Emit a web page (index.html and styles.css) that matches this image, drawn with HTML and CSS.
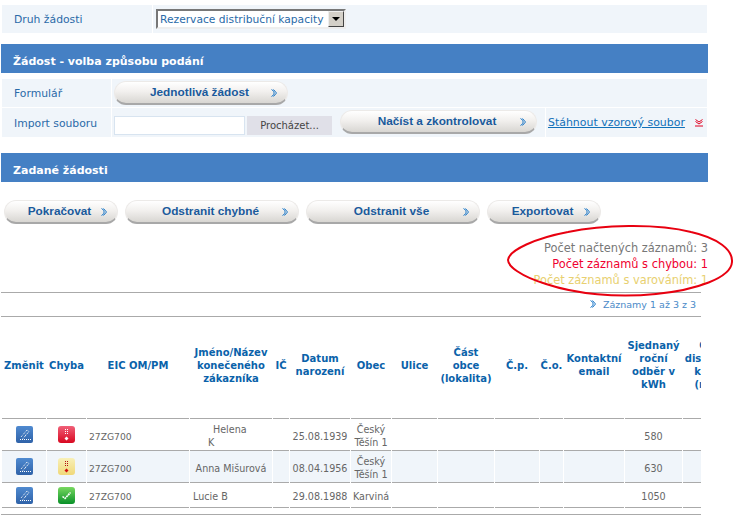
FILE: index.html
```html
<!DOCTYPE html>
<html>
<head>
  <title>Žádost</title>
  <link rel="stylesheet" href="styles.css">
</head>
<body>
  <svg class="defs" width="0" height="0">
    <defs>
      <symbol id="chev" viewBox="0 0 6 8">
        <path d="M0.5 0.5 L3 2.5 L3 5.5 L0.5 7.5 M2.5 0.5 L5.5 4 L2.5 7.5" fill="none" stroke="#1c78c8" stroke-width="1"/>
      </symbol>
      <linearGradient id="gBlue" x1="0" y1="0" x2="0" y2="1"><stop offset="0" stop-color="#4f8ad0"/><stop offset="1" stop-color="#2f62a8"/></linearGradient>
      <linearGradient id="gRed" x1="0" y1="0" x2="0" y2="1"><stop offset="0" stop-color="#f06078"/><stop offset="1" stop-color="#d80820"/></linearGradient>
      <linearGradient id="gYellow" x1="0" y1="0" x2="0" y2="1"><stop offset="0" stop-color="#f8f0b8"/><stop offset="1" stop-color="#f0d878"/></linearGradient>
      <linearGradient id="gGreen" x1="0" y1="0" x2="0" y2="1"><stop offset="0" stop-color="#78d860"/><stop offset="1" stop-color="#089028"/></linearGradient>
      <symbol id="edit" viewBox="0 0 17 17">
        <rect width="17" height="17" rx="2" fill="url(#gBlue)"/>
        <path d="M4 13.5 H15 M5 11 L11 4 L13 5.5 L7 12.5 M9 9 L10.5 10" fill="none" stroke="#fff" stroke-width="1" stroke-dasharray="1 1"/>
      </symbol>
      <symbol id="err" viewBox="0 0 17 17">
        <rect width="17" height="17" rx="3" fill="url(#gRed)"/>
        <path d="M7 3.5 H8 M9 3.5 H10 M7 5.5 H8 M9 5.5 H10 M7 7.5 H8 M9 7.5 H10" stroke="#fff" stroke-width="1"/>
        <path d="M8.5 10.5 L10.5 12.5 L8.5 14.5 L6.5 12.5 Z" fill="#fff"/>
      </symbol>
      <symbol id="warn" viewBox="0 0 17 17">
        <rect width="17" height="17" rx="3" fill="url(#gYellow)"/>
        <path d="M7 3.5 H8 M9 3.5 H10 M7 5.5 H8 M9 5.5 H10 M7 7.5 H8 M9 7.5 H10" stroke="#b01010" stroke-width="1"/>
        <path d="M8.5 10.5 L10.5 12.5 L8.5 14.5 L6.5 12.5 Z" fill="#d01010"/>
      </symbol>
      <symbol id="ok" viewBox="0 0 17 17">
        <rect width="17" height="17" rx="3" fill="url(#gGreen)"/>
        <path d="M4.5 9.5 L7 11.5 L12.5 5.5" fill="none" stroke="#fff" stroke-width="1.6" stroke-dasharray="2 0.6"/>
      </symbol>
    </defs>
  </svg>

  <div class="page">
    <div class="row row-type">
      <div class="cell cell-label-wide">Druh žádosti</div>
      <div class="cell cell-fill">
        <div class="fake-select">
          <span class="fake-select-text">Rezervace distribuční kapacity</span>
          <span class="fake-select-arrow"></span>
        </div>
      </div>
    </div>

    <h2 class="band band-first">Žádost - volba způsobu podání</h2>

    <div class="form-rows">
      <div class="row row-form">
        <div class="cell cell-label">Formulář</div>
        <div class="cell cell-fill">
          <a class="btn btn-single">Jednotlivá žádost<svg class="chev"><use href="#chev"/></svg></a>
        </div>
      </div>
      <div class="row row-import">
        <div class="cell cell-label">Import souboru</div>
        <div class="cell cell-import">
          <input class="file-text" type="text">
          <button class="file-btn" type="button">Procházet...</button>
          <a class="btn btn-load">Načíst a zkontrolovat<svg class="chev"><use href="#chev"/></svg></a>
        </div>
        <div class="cell cell-fill cell-link">
          <a class="sample-link">Stáhnout vzorový soubor</a>
          <svg class="down-icon" width="8" height="8" viewBox="0 0 8 8">
            <path d="M0.5 0.5 L4 3 L7.5 0.5 M0.5 2.5 L4 5 L7.5 2.5" fill="none" stroke="#e00020" stroke-width="1"/>
            <path d="M0 7 H8" stroke="#e00020" stroke-width="1"/>
          </svg>
        </div>
      </div>
    </div>

    <h2 class="band band-second">Zadané žádosti</h2>

    <div class="actions">
      <a class="btn btn-continue">Pokračovat<svg class="chev"><use href="#chev"/></svg></a>
      <a class="btn btn-wide">Odstranit chybné<svg class="chev"><use href="#chev"/></svg></a>
      <a class="btn btn-wide">Odstranit vše<svg class="chev"><use href="#chev"/></svg></a>
      <a class="btn btn-continue">Exportovat<svg class="chev"><use href="#chev"/></svg></a>
    </div>

    <div class="counts">
      <div class="count-all">Počet načtených záznamů: 3</div>
      <div class="count-err">Počet záznamů s chybou: 1</div>
      <div class="count-warn">Počet záznamů s varováním: 1</div>
    </div>

    <div class="pager">
      <svg class="chev"><use href="#chev"/></svg>
      <span>Záznamy 1 až 3 z 3</span>
    </div>

    <div class="table-wrap">
      <table class="grid">
        <colgroup>
          <col class="c44"><col class="c39"><col class="c102"><col class="c82"><col class="c16"><col class="c60"><col class="c40"><col class="c45"><col class="c56"><col class="c44"><col class="c23"><col class="c60"><col class="c57"><col class="c64">
        </colgroup>
        <thead>
          <tr>
            <th>Změnit</th><th>Chyba</th><th>EIC OM/PM</th><th>Jméno/Název konečeného zákazníka</th><th>IČ</th><th>Datum narození</th><th>Obec</th><th>Ulice</th><th>Část<br>obce<br>(lokalita)</th><th>Č.p.</th><th>Č.o.</th><th>Kontaktní email</th><th>Sjednaný roční odběr v kWh</th><th>Ceník distribuční kapacit (r.&nbsp;MW)</th>
          </tr>
        </thead>
        <tbody>
          <tr class="row-tall">
            <td class="icon-cell"><svg class="icon"><use href="#edit"/></svg></td>
            <td class="icon-cell"><svg class="icon"><use href="#err"/></svg></td>
            <td class="eic">27ZG700</td>
            <td class="name-split">Helena<br><span class="name-k">K</span></td>
            <td></td>
            <td>25.08.1939</td>
            <td>Český Těšín 1</td>
            <td></td><td></td><td></td><td></td><td></td>
            <td>580</td>
            <td></td>
          </tr>
          <tr class="row-tall row-alt">
            <td class="icon-cell"><svg class="icon"><use href="#edit"/></svg></td>
            <td class="icon-cell"><svg class="icon"><use href="#warn"/></svg></td>
            <td class="eic">27ZG700</td>
            <td>Anna Mišurová</td>
            <td></td>
            <td>08.04.1956</td>
            <td>Český Těšín 1</td>
            <td></td><td></td><td></td><td></td><td></td>
            <td>630</td>
            <td></td>
          </tr>
          <tr class="row-short">
            <td class="icon-cell"><svg class="icon"><use href="#edit"/></svg></td>
            <td class="icon-cell"><svg class="icon"><use href="#ok"/></svg></td>
            <td class="eic">27ZG700</td>
            <td class="name-cut"><span>Lucie Be</span></td>
            <td></td>
            <td>29.08.1988</td>
            <td>Karviná</td>
            <td></td><td></td><td></td><td></td><td></td>
            <td>1050</td>
            <td></td>
          </tr>
        </tbody>
      </table>
    </div>
    <div class="table-end"></div>

    <svg class="ring" width="230" height="76" viewBox="0 0 230 76">
      <path d="M62 8 C95 1 150 -1 185 8 C212 14 227 26 226 38 C225 54 190 66 150 70 C110 74 70 70 40 60 C14 52 2 42 2 36 C3 26 30 14 62 8 Z" fill="none" stroke="#e80010" stroke-width="2"/>
    </svg>
  </div>
</body>
</html>
```

FILE: styles.css
```css
body {
  margin: 0;
  background-color: #fff;
  font-family: "DejaVu Sans", Verdana, sans-serif;
  font-size: 11px;
  color: #555;
}

a {
  cursor: pointer;
}

.defs {
  position: absolute;
}

.page {
  position: relative;
  width: 738px;
  height: 519px;
  overflow: hidden;
  padding-top: 5px;
  box-sizing: border-box;
}

.row {
  display: flex;
  gap: 1px;
  margin: 0 31px 0 2px;
}

.cell {
  background-color: #f0f5fa;
  display: flex;
  align-items: center;
  color: #2a6aa8;
  box-sizing: border-box;
  font-size: 10.8px;
}

.cell-fill {
  flex: 1;
}

.row-type {
  height: 28px;
}

.cell-label-wide {
  width: 150px;
  padding: 1px 0 0 12px;
}

.cell-label {
  width: 109px;
  padding: 1px 0 0 12px;
}

.row-type .cell-fill {
  padding-left: 3px;
}

.fake-select {
  display: flex;
  align-items: center;
  justify-content: space-between;
  width: 190px;
  height: 20px;
  box-sizing: border-box;
  background-color: #fff;
  border: 2px solid;
  border-color: #777 #eee #eee #777;
  padding-left: 2px;
}

.fake-select-text {
  white-space: nowrap;
  overflow: hidden;
  color: #2a6aa8;
  font-size: 10.7px;
}

.fake-select-arrow {
  position: relative;
  flex: none;
  width: 16px;
  height: 16px;
  background-color: #d4d0c8;
  box-sizing: border-box;
  border: 1px solid;
  border-color: #eee #444 #444 #eee;
}

.fake-select-arrow::after {
  content: "";
  position: absolute;
  left: 3px;
  top: 5px;
  border: 4px solid transparent;
  border-top-color: #000;
  border-bottom: none;
}

.band {
  margin: 0 30px 0 1px;
  height: 29px;
  line-height: 35px;
  padding-left: 12px;
  background-color: #4580c4;
  color: #fff;
  font-size: 11px;
  font-weight: bold;
}

.band-first {
  margin-top: 11px;
}

.band-second {
  margin-top: 16px;
}

.form-rows {
  margin-top: 6px;
  display: flex;
  flex-direction: column;
  gap: 1px;
}

.row-form {
  height: 28px;
}

.row-form .cell-fill {
  padding-left: 2px;
}

.row-import {
  height: 29px;
}

.cell-import {
  width: 433px;
  padding-left: 2px;
}

.file-text {
  width: 131px;
  height: 19px;
  box-sizing: border-box;
  margin: 5px 0 0 0;
  border: 1px solid #d8e4f0;
  background-color: #fff;
  padding: 0;
}

.file-btn {
  width: 85px;
  height: 19px;
  margin: 5px 0 0 2px;
  padding: 0;
  border: none;
  background-color: #e0e0e8;
  color: #444;
  font-family: "DejaVu Sans", Verdana, sans-serif;
  font-size: 10px;
}

.btn-load {
  margin: 0 0 1px 8px;
}

.cell-link {
  padding-left: 2px;
  gap: 10px;
  font-size: 10.95px;
}

.sample-link {
  color: #1070b8;
  text-decoration: underline;
  white-space: nowrap;
}

.down-icon {
  flex: none;
  margin-top: 1px;
}

.btn {
  position: relative;
  display: flex;
  align-items: center;
  justify-content: center;
  height: 24px;
  box-sizing: border-box;
  border-radius: 12px;
  padding: 0 3px 2px 0;
  background: linear-gradient(#fff, #f2f0ee 45%, #d8d6d2);
  border: 1px solid #eceae8;
  border-bottom: 2px solid #a8a8a8;
  font-family: "Liberation Sans", Arial, sans-serif;
  font-size: 11.8px;
  font-weight: bold;
  color: #1a5a9c;
  white-space: nowrap;
}

.btn-single {
  width: 174px;
}

.btn-load {
  width: 197px;
}

.btn-continue {
  width: 114px;
}

.btn-wide {
  width: 174px;
}

.chev {
  width: 6px;
  height: 8px;
}

.btn .chev {
  position: absolute;
  right: 10px;
  top: 7px;
}

.actions {
  display: flex;
  gap: 7px;
  margin: 18px 0 0 4px;
}

.counts {
  margin: 16px 30px 0 0;
  text-align: right;
  line-height: 16px;
  height: 52px;
  font-size: 11.4px;
}

.count-all {
  color: #777;
}

.count-err {
  color: #f00030;
}

.count-warn {
  color: #e8d070;
}

.pager {
  display: flex;
  align-items: center;
  justify-content: flex-end;
  gap: 7px;
  width: 700px;
  height: 25px;
  margin-left: 1px;
  padding: 0 5px 1px 0;
  box-sizing: border-box;
  border-top: 1px solid #aaa;
  border-bottom: 1px solid #aaa;
  color: #4a8ac8;
  font-size: 9.5px;
}

.table-wrap {
  width: 701px;
  overflow: hidden;
}

.grid {
  table-layout: fixed;
  width: 747px;
  margin-left: 1px;
  border-collapse: separate;
  border-spacing: 1px 0;
}

.c16 { width: 16px; }
.c23 { width: 23px; }
.c39 { width: 39px; }
.c40 { width: 40px; }
.c44 { width: 44px; }
.c45 { width: 45px; }
.c56 { width: 56px; }
.c57 { width: 57px; }
.c60 { width: 60px; }
.c64 { width: 64px; }
.c82 { width: 82px; }
.c102 { width: 102px; }

.grid th {
  height: 102px;
  padding: 0 0 5px 0;
  box-sizing: border-box;
  border-bottom: 1px solid #aaa;
  font-size: 10px;
  line-height: 13px;
  font-weight: bold;
  color: #0a62aa;
  text-align: center;
  vertical-align: middle;
}

.grid td {
  padding: 3px 0 0 0;
  border-bottom: 1px solid #aaa;
  font-size: 9.6px;
  line-height: 13px;
  color: #666;
  text-align: center;
  vertical-align: middle;
}

.row-tall td {
  height: 28px;
}

.row-short td {
  height: 21px;
}

.row-alt td {
  background-color: #f0f5fa;
}

.grid .icon-cell {
  padding: 0;
  line-height: 0;
}

.icon {
  display: inline-block;
  width: 17px;
  height: 17px;
}

.grid .eic {
  text-align: left;
  padding-left: 2px;
  font-size: 9.2px;
}

.grid .name-split {
  text-align: left;
  padding-left: 23px;
}

.name-k {
  margin-left: -5px;
}

.grid .name-cut {
  text-align: left;
  padding-left: 3px;
}

.name-cut span {
  display: inline-block;
  width: 35px;
  overflow: hidden;
  white-space: nowrap;
  vertical-align: middle;
}

.table-end {
  width: 700px;
  margin: 6px 0 0 1px;
  border-top: 1px solid #aaa;
}

.ring {
  position: absolute;
  left: 506px;
  top: 224px;
}
```
